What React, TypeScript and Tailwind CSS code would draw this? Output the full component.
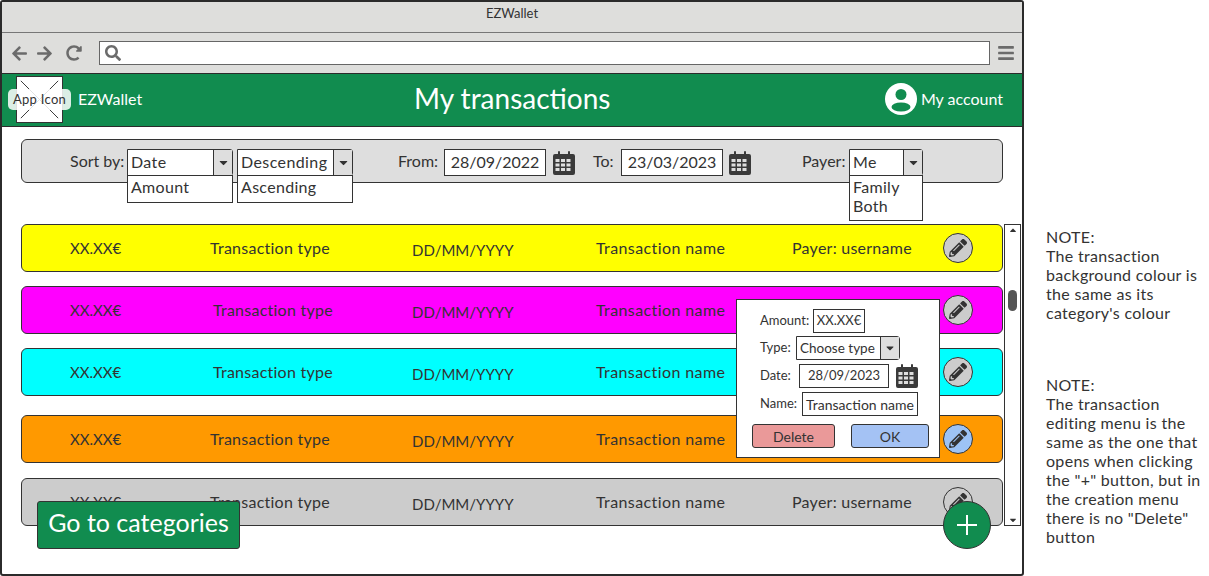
import {
  FaArrowLeft,
  FaArrowRight,
  FaBars,
  FaCaretDown,
  FaCaretUp,
  FaPencilAlt,
  FaRedoAlt,
  FaSearch,
} from "react-icons/fa";

const CalendarIcon = ({ className }: { className: string }) => (
  <svg viewBox="0 0 22 24" className={className} fill="#3a3a3a">
    <path d="M2 3h3V1a1 1 0 0 1 2 0v2h8V1a1 1 0 0 1 2 0v2h3a2 2 0 0 1 2 2v17a2 2 0 0 1-2 2H2a2 2 0 0 1-2-2V5a2 2 0 0 1 2-2z" />
    <g fill="#dedede">
      <rect x="2.5" y="8" width="4" height="3" />
      <rect x="8" y="8" width="4" height="3" />
      <rect x="13.5" y="8" width="4" height="3" />
      <rect x="2.5" y="12.5" width="4" height="3" />
      <rect x="8" y="12.5" width="4" height="3" />
      <rect x="13.5" y="12.5" width="4" height="3" />
      <rect x="2.5" y="17" width="4" height="3" />
      <rect x="8" y="17" width="4" height="3" />
      <rect x="13.5" y="17" width="4" height="3" />
    </g>
  </svg>
);

const Select = ({
  value,
  width,
  options,
  listHeight,
}: {
  value: string;
  width: string;
  options?: string[];
  listHeight?: string;
}) => (
  <div className={`relative flex h-[27px] shrink-0 ${width} rounded-r-[3px] border border-[#333] bg-white`}>
    <span className="flex-1 pl-[3px] text-[16px] leading-[23px] tracking-[0.4px]">{value}</span>
    <span className="flex w-[19px] items-center justify-center border-l border-[#333] bg-[#dedede]">
      <FaCaretDown className="text-[13px]" />
    </span>
    {options && (
      <div className={`absolute left-[-1px] right-[-1px] top-[25px] z-10 ${listHeight} border border-[#333] bg-white pl-[3px] pt-[1px] text-[16px] leading-[19px] tracking-[0.3px]`}>
        {options.map((o) => (
          <div key={o}>{o}</div>
        ))}
      </div>
    )}
  </div>
);

const DateInput = ({ value }: { value: string }) => (
  <div className="h-[27px] w-[102px] shrink-0 border border-[#333] bg-white text-center text-[16px] leading-[23px]">
    {value}
  </div>
);

const rows = [
  { bg: "bg-[#ffff00]", type: "ml-0", mt: "mt-0", payer: true },
  { bg: "bg-[#ff00ff]", type: "ml-[3px]", mt: "mt-[14px]", payer: false },
  { bg: "bg-[#00ffff]", type: "ml-[3px]", mt: "mt-[14px]", payer: false },
  { bg: "bg-[#ff9900]", type: "ml-0", mt: "mt-[19px]", payer: false, active: true },
  { bg: "bg-[#cccccc]", type: "ml-0", mt: "mt-[15px]", payer: true },
];

const TransactionRow = ({ bg, type, mt, payer, active }: (typeof rows)[number] & { active?: boolean }) => (
  <div className={`flex h-[48px] items-center rounded-[6px] border border-[#333] pl-[48px] text-[16px] tracking-[0.25px] ${bg} ${mt}`}>
    <span className="w-[140px] text-[15px] tracking-normal">XX.XX€</span>
    <span className="w-[202px]">
      <span className={`inline-block ${type}`}>Transaction type</span>
    </span>
    <span className="mt-[4px] w-[184px] text-[15px] tracking-normal">DD/MM/YYYY</span>
    <span className="w-[196px] tracking-[0.4px]">Transaction name</span>
    <span className="w-[151px]">{payer ? "Payer: username" : ""}</span>
    <span className={`flex h-[30px] w-[30px] items-center justify-center rounded-full border border-[#333] ${active ? "bg-[#9dc3f5]" : "bg-[#cccccc]"}`}>
      <FaPencilAlt className="text-[18px]" />
    </span>
  </div>
);

const EditMenu = () => (
  <div className="absolute left-[734px] top-[172px] z-20 h-[159px] w-[204px] border border-[#333] bg-white pl-[23px] pt-[9px] text-[13px] text-[#333]">
    <div className="flex h-[24px] items-center">
      <span className="w-[53px]">Amount:</span>
      <span className="flex h-[24px] w-[52px] items-center justify-center border border-[#333] text-[13px]">XX.XX€</span>
    </div>
    <div className="mt-[3px] flex h-[24px] items-center">
      <span className="w-[36px]">Type:</span>
      <div className="flex h-[24px] w-[104px] rounded-r-[3px] border border-[#333] text-[13.5px]">
        <span className="flex-1 pl-[3px] leading-[22px]">Choose type</span>
        <span className="flex w-[19px] items-center justify-center border-l border-[#333] bg-[#dedede]">
          <FaCaretDown className="text-[12px]" />
        </span>
      </div>
    </div>
    <div className="mt-[4px] flex h-[24px] items-center">
      <span className="w-[39px]">Date:</span>
      <span className="flex h-[24px] w-[90px] items-center justify-center border border-[#333] text-[13px]">28/09/2023</span>
      <CalendarIcon className="ml-[7px] h-[24px] w-[22px]" />
    </div>
    <div className="mt-[4px] flex h-[24px] items-center">
      <span className="w-[42px]">Name:</span>
      <span className="flex h-[24px] w-[116px] items-center justify-center border border-[#333] text-[14px]">Transaction name</span>
    </div>
    <div className="ml-[-8px] mt-[8px] flex h-[24px] gap-[16px] text-[14px]">
      <button className="w-[83px] rounded-[3px] border border-[#333] bg-[#ea9999]">Delete</button>
      <button className="w-[78px] rounded-[3px] border border-[#333] bg-[#a4c2f4]">OK</button>
    </div>
  </div>
);

const App = () => {
  return (
    <div className="flex h-[576px] w-[1209px] overflow-hidden bg-white font-['Lato',sans-serif] text-[#333]">
      <div className="relative flex h-[576px] w-[1024px] shrink-0 flex-col rounded-[3px] border-2 border-[#2b2b2b]">
        <div className="h-[31px] shrink-0 border-b border-[#777] bg-[#dededc] pt-[3px] text-center text-[13px] leading-[16px]">
          EZWallet
        </div>
        <div className="flex h-[40px] shrink-0 items-center bg-[#dededc] pl-[9px] text-[#6b6b6b]">
          <FaArrowLeft className="text-[17px]" />
          <FaArrowRight className="ml-[8px] text-[17px]" />
          <FaRedoAlt className="ml-[13px] text-[16px]" />
          <div className="ml-[17px] flex h-[24px] w-[891px] items-center border border-[#666] bg-white pl-[5px]">
            <FaSearch className="text-[16px]" />
          </div>
          <FaBars className="ml-[7px] text-[18px]" />
        </div>
        <header className="relative flex h-[54px] shrink-0 items-center border-y border-[#2b2b2b] bg-[#118c4f] pl-[14px] pr-[19px] text-white">
          <div className="relative -mt-[1px] h-[47px] w-[47px] border border-[#333] bg-white">
            <svg viewBox="0 0 47 47" className="h-full w-full" stroke="#333" strokeWidth="1">
              <line x1="4" y1="4" x2="43" y2="43" />
              <line x1="43" y1="4" x2="4" y2="43" />
            </svg>
            <span className="absolute left-[-9px] top-[12px] flex h-[21px] w-[63px] items-center justify-center rounded-[5px] bg-white/85 text-[13px] tracking-[0.3px] text-[#333]">
              App Icon
            </span>
          </div>
          <span className="ml-[15px] -mt-[2px] text-[16px]">EZWallet</span>
          <span className="absolute left-[412px] top-[3px] text-[28px]">My transactions</span>
          <div className="ml-auto -mt-[2px] flex items-center gap-[4px]">
            <svg viewBox="0 0 32 32" className="h-[32px] w-[32px]">
              <circle cx="16" cy="16" r="16" fill="white" />
              <circle cx="16" cy="11.5" r="5.5" fill="#118c4f" />
              <ellipse cx="16" cy="24" rx="9.5" ry="4.5" fill="#118c4f" />
            </svg>
            <span className="text-[16px]">My account</span>
          </div>
        </header>
        <main className="relative flex-1 pl-[19px] pt-[12px]">
          <div className="flex h-[44px] w-[982px] items-center rounded-[6px] border border-[#333] bg-[#dedede] pl-[48px] pt-[3px] text-[16px]">
            <span className="-mt-[3px] w-[57px]">Sort by:</span>
            <Select value="Date" width="w-[106px]" options={["Amount"]} listHeight="h-[28px]" />
            <div className="ml-[4px]">
              <Select value="Descending" width="w-[116px]" options={["Ascending"]} listHeight="h-[28px]" />
            </div>
            <span className="-mt-[3px] ml-[45px] w-[46px]">From:</span>
            <DateInput value="28/09/2022" />
            <CalendarIcon className="ml-[7px] h-[24px] w-[22px]" />
            <span className="-mt-[3px] ml-[18px] w-[28px]">To:</span>
            <DateInput value="23/03/2023" />
            <CalendarIcon className="ml-[6px] h-[24px] w-[22px]" />
            <span className="-mt-[3px] ml-[51px] w-[47px]">Payer:</span>
            <Select value="Me" width="w-[74px]" options={["Family", "Both"]} listHeight="h-[46px]" />
          </div>
          <div className="mt-[41px] flex gap-[1px]">
            <div className="w-[982px] shrink-0">
              {rows.map((r) => (
                <TransactionRow key={r.bg} {...r} />
              ))}
            </div>
            <div className="relative h-[302px] w-[17px] border border-[#333] bg-white">
              <FaCaretUp className="absolute left-[3px] top-0 text-[10px]" />
              <span className="absolute left-[3px] top-[65px] h-[21px] w-[9px] rounded-full bg-[#555]" />
              <FaCaretDown className="absolute bottom-0 left-[3px] text-[10px]" />
            </div>
          </div>
          <EditMenu />
          <button className="absolute left-[35px] top-[374px] z-20 h-[48px] w-[203px] rounded-[3px] border border-[#333] bg-[#118c4f] pb-[4px] text-[25px] text-white">
            Go to categories
          </button>
          <button className="absolute left-[941px] top-[374px] z-20 flex h-[48px] w-[48px] items-center justify-center rounded-full border border-[#333] bg-[#118c4f] text-white">
            <svg viewBox="0 0 20 20" className="h-[20px] w-[20px]" stroke="white" strokeWidth="2">
              <line x1="10" y1="0" x2="10" y2="20" />
              <line x1="0" y1="10" x2="20" y2="10" />
            </svg>
          </button>
        </main>
      </div>
      <aside className="ml-[22px] w-[160px] text-[16px] leading-[19px] tracking-[0.3px]">
        <p className="mt-[227px]">
          NOTE:
          <br />
          The transaction
          <br />
          background colour is
          <br />
          the same as its
          <br />
          category's colour
        </p>
        <p className="mt-[53px]">
          NOTE:
          <br />
          The transaction
          <br />
          editing menu is the
          <br />
          same as the one that
          <br />
          opens when clicking
          <br />
          the "+" button, but in
          <br />
          the creation menu
          <br />
          there is no "Delete"
          <br />
          button
        </p>
      </aside>
    </div>
  );
};

export default App;
